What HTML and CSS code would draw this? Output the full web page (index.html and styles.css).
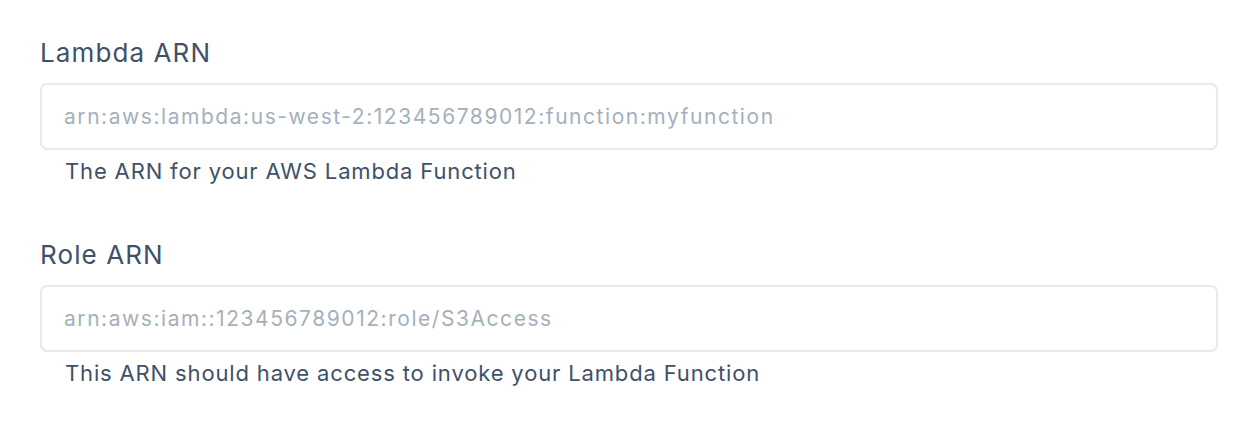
FILE: index.html
```html
<!DOCTYPE html>
<html lang="en">
<head>
<meta charset="utf-8">
<title>Lambda settings</title>
<link rel="stylesheet" href="styles.css">
</head>
<body>
<form class="form">
  <div class="field">
    <label class="label" for="lambda-arn">Lambda ARN</label>
    <input class="input" id="lambda-arn" type="text" placeholder="arn:aws:lambda:us-west-2:123456789012:function:myfunction">
    <p class="help">The ARN for your AWS Lambda Function</p>
  </div>
  <div class="field">
    <label class="label" for="role-arn">Role ARN</label>
    <input class="input" id="role-arn" type="text" placeholder="arn:aws:iam::123456789012:role/S3Access">
    <p class="help">This ARN should have access to invoke your Lambda Function</p>
  </div>
</form>
</body>
</html>
```

FILE: styles.css
```css
html, body {
  margin: 0;
  padding: 0;
  background: #ffffff;
}

body {
  font-family: Inter, "Open Sans", "Liberation Sans", sans-serif;
  color: #3e5169;
}

.form {
  display: flex;
  flex-direction: column;
  gap: 55px;
  padding: 38px 28px 0 40px;
}

.field {
  display: flex;
  flex-direction: column;
}

.label {
  font-size: 26px;
  line-height: 30px;
  letter-spacing: 1.1px;
  margin-bottom: 14.5px;
}

.input {
  box-sizing: border-box;
  width: 100%;
  height: 67px;
  margin: 0;
  padding: 0 22px;
  border: 2px solid #e8e9ea;
  border-radius: 7px;
  font-family: inherit;
  font-size: 21px;
  letter-spacing: 1.55px;
  color: #3e5169;
  background: #ffffff;
  outline: none;
}

.input::placeholder {
  color: #a5b0bd;
  opacity: 1;
}

.help {
  margin: 7.5px 0 0 25px;
  font-size: 22px;
  line-height: 28px;
  letter-spacing: 0.85px;
}
```
